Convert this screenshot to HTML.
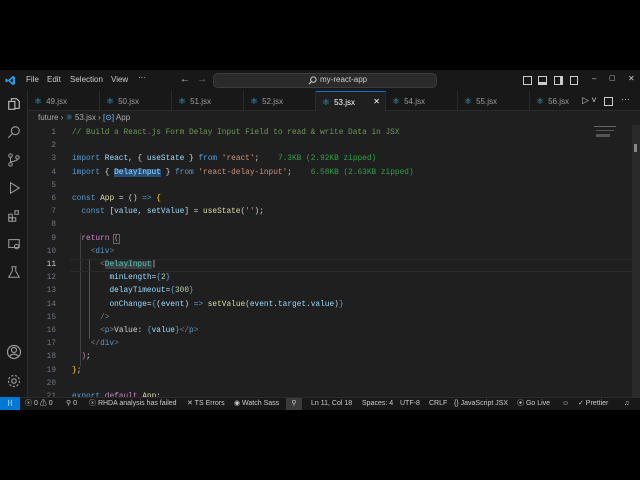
<!DOCTYPE html>
<html><head><meta charset="utf-8"><style>
*{margin:0;padding:0;box-sizing:border-box}
body{width:640px;height:480px;background:#000;position:relative;overflow:hidden;font-family:"Liberation Sans",sans-serif;color:#ccc}
.abs{position:absolute}
#title{left:0;top:70px;width:640px;height:21px;background:#181818;font-size:8px}
#tabs{left:28px;top:91px;width:612px;height:20px;background:#181818;border-bottom:1px solid #2b2b2b}
.tab{position:absolute;top:0;height:20px;width:72px;font-size:8px;color:#9d9d9d;line-height:20px;padding-left:6px;border-right:1px solid #2b2b2b}
.tab i{font-style:normal;color:#3fb6d5;margin-right:4px;font-size:9px}
#act{left:0;top:91px;width:28px;height:306px;background:#181818;border-right:1px solid #2b2b2b}
#ed{left:28px;top:111px;width:612px;height:286px;background:#1f1f1f}
.ln{position:absolute;left:28px;width:28px;text-align:right;font-family:"Liberation Mono",monospace;font-size:7.8px;color:#6e7681;line-height:13.2px}
.cd{position:absolute;left:72px;font-family:"Liberation Mono",monospace;font-size:7.8px;color:#d4d4d4;line-height:13.2px;white-space:pre}
.k{color:#569cd6}.c{color:#6a9955}.s{color:#ce9178}.v{color:#9cdcfe}.f{color:#dcdcaa}.t{color:#4ec9b0}.p{color:#c586c0}.g{color:#808080}.n{color:#b5cea8}.y{color:#ffd700}.sz{color:#2ea043}
#status{left:0;top:397px;width:640px;height:13px;background:#181818;border-top:1px solid #2b2b2b;font-size:7px;line-height:12px;color:#ccc;white-space:nowrap}
#status span{position:absolute;top:0}
svg{position:absolute}
</style></head><body>
<div id="title" class="abs">
 <svg style="left:5px;top:5px" width="11" height="11" viewBox="0 0 24 24"><path d="M17 2l5 2.5v15L17 22 7 13l-4 3-2-1V9l2-1 4 3 10-9zm0 5l-6 5 6 5z" fill="#2b9be8"/></svg>
 <span class="abs" style="left:26px;top:5px">File</span>
 <span class="abs" style="left:47px;top:5px">Edit</span>
 <span class="abs" style="left:70px;top:5px">Selection</span>
 <span class="abs" style="left:111px;top:5px">View</span>
 <span class="abs" style="left:138px;top:3px">···</span>
 <span class="abs" style="left:180px;top:4px;font-size:10px">←</span>
 <span class="abs" style="left:197px;top:4px;font-size:10px;color:#777">→</span>
 <div class="abs" style="left:213px;top:3px;width:224px;height:15px;background:#2a2a2a;border:1px solid #3c3c3c;border-radius:5px"></div>
 <svg style="left:308px;top:6px" width="9" height="9" viewBox="0 0 10 10" fill="none" stroke="#ccc" stroke-width="1.1"><circle cx="6" cy="4" r="3"/><path d="M4 6L1 9"/></svg>
 <span class="abs" style="left:320px;top:5px">my-react-app</span>
 <div class="abs" style="left:523px;top:6px;width:9px;height:9px;border:1px solid #ccc"></div>
 <div class="abs" style="left:538px;top:6px;width:9px;height:9px;border:1px solid #ccc;border-bottom-width:3px"></div>
 <div class="abs" style="left:554px;top:6px;width:9px;height:9px;border:1px solid #ccc;border-right-width:3px"></div>
 <div class="abs" style="left:570px;top:6px;width:8px;height:9px;border:1px solid #ccc"></div>
 <span class="abs" style="left:592px;top:4px">–</span>
 <span class="abs" style="left:609px;top:4px;font-size:7px">▢</span>
 <span class="abs" style="left:628px;top:4px">✕</span>
</div>
<div id="act" class="abs">
 <svg style="left:7px;top:6px" width="14" height="14" viewBox="0 0 16 16" fill="none" stroke="#ccc" stroke-width="1.2"><path d="M5 4V2h6l3 3v8H9"/><rect x="2" y="5" width="7" height="9"/></svg>
 <svg style="left:7px;top:34px" width="14" height="14" viewBox="0 0 16 16" fill="none" stroke="#999" stroke-width="1.3"><circle cx="9.5" cy="6.5" r="4.5"/><path d="M6 10l-4.5 4.5"/></svg>
 <svg style="left:7px;top:62px" width="14" height="14" viewBox="0 0 16 16" fill="none" stroke="#999" stroke-width="1.2"><circle cx="4" cy="3" r="2"/><circle cx="4" cy="13" r="2"/><circle cx="12" cy="5" r="2"/><path d="M4 5v6M12 7c0 3-8 2-8 4"/></svg>
 <svg style="left:7px;top:90px" width="14" height="14" viewBox="0 0 16 16" fill="none" stroke="#999" stroke-width="1.2"><path d="M4 2l10 6-10 6z"/></svg>
 <svg style="left:7px;top:118px" width="14" height="14" viewBox="0 0 16 16" fill="none" stroke="#999" stroke-width="1.2"><rect x="2" y="6" width="4" height="4"/><rect x="6" y="10" width="4" height="4"/><rect x="2" y="10" width="4" height="4"/><rect x="9" y="2" width="4" height="4"/></svg>
 <svg style="left:7px;top:146px" width="14" height="14" viewBox="0 0 16 16" fill="none" stroke="#999" stroke-width="1.2"><rect x="2" y="3" width="12" height="9"/><circle cx="11" cy="11" r="2.5"/></svg>
 <svg style="left:7px;top:174px" width="14" height="14" viewBox="0 0 16 16" fill="none" stroke="#999" stroke-width="1.2"><path d="M6 2v5L2 14h12l-4-7V2M5 2h6"/></svg>
 <svg style="left:6px;top:253px" width="16" height="16" viewBox="0 0 16 16" fill="none" stroke="#999" stroke-width="1.2"><circle cx="8" cy="8" r="6.5"/><circle cx="8" cy="6" r="2.5"/><path d="M3.5 12.5c2-3 7-3 9 0"/></svg>
 <svg style="left:6px;top:282px" width="16" height="16" viewBox="0 0 16 16" fill="none" stroke="#999" stroke-width="1.2"><circle cx="8" cy="8" r="2.2"/><circle cx="8" cy="8" r="5.5" stroke-dasharray="2.2 1.6"/></svg>
</div>
<div id="tabs" class="abs">
 <div class="tab" style="left:0"><i>⚛</i>49.jsx</div>
 <div class="tab" style="left:72px"><i>⚛</i>50.jsx</div>
 <div class="tab" style="left:144px"><i>⚛</i>51.jsx</div>
 <div class="tab" style="left:216px"><i>⚛</i>52.jsx</div>
 <div class="tab" style="left:288px;width:70px;background:#1f1f1f;color:#fff;border-top:1px solid #0078d4;height:21px"><i>⚛</i>53.jsx<span style="position:absolute;right:5px">✕</span></div>
 <div class="tab" style="left:358px"><i>⚛</i>54.jsx</div>
 <div class="tab" style="left:430px"><i>⚛</i>55.jsx</div>
 <div class="tab" style="left:502px;border:none"><i>⚛</i>56.jsx</div>
 <span class="abs" style="left:554px;top:4px;font-size:9px">▷ ˅</span>
 <div class="abs" style="left:576px;top:6px;width:9px;height:9px;border:1px solid #ccc"></div>
 <span class="abs" style="left:593px;top:3px;font-size:9px">···</span>
</div>
<div id="ed" class="abs"></div>
<div class="abs" style="left:38px;top:113px;font-size:8px;color:#aaa">future › <span style="color:#3fb6d5">⚛</span> 53.jsx › <span style="color:#75beff">[⊙]</span> App</div>
<div class="abs" style="left:594px;top:126px;width:22px;height:1px;background:#666"></div>
<div class="abs" style="left:596px;top:130px;width:18px;height:1px;background:#555"></div>
<div class="abs" style="left:596px;top:134px;width:14px;height:3px;background:#555"></div>
<div class="abs" style="left:632px;top:125px;width:8px;height:272px;background:#2a2a2a"></div>
<div class="abs" style="left:634px;top:144px;width:3px;height:8px;background:#888"></div>
<div class="abs" style="left:80px;top:233px;width:1px;height:133px;background:#404040"></div>
<div class="abs" style="left:89px;top:259px;width:1px;height:80px;background:#6b3f78"></div>
<div class="abs" style="left:70px;top:259px;width:570px;height:13px;border-top:1px solid #2a2a2a;border-bottom:1px solid #2a2a2a"></div>
<div id="code">
<div class="ln" style="top:127px">1<br>2<br>3<br>4<br>5<br>6<br>7<br>8<br>9<br>10<br><span style="color:#ccc">11</span><br>12<br>13<br>14<br>15<br>16<br>17<br>18<br>19<br>20<br>21</div>
<div class="cd" style="top:127px"><span class="c">// Build a React.js Form Delay Input Field to read &amp; write Data in JSX</span>

<span class="k">import</span> <span class="v">React</span>, { <span class="v">useState</span> } <span class="k">from</span> <span class="s">'react'</span>;    <span class="sz">7.3KB (2.92KB zipped)</span>
<span class="k">import</span> { <span class="v" style="background:#264f78">DelayInput</span> } <span class="k">from</span> <span class="s">'react-delay-input'</span>;    <span class="sz">6.58KB (2.63KB zipped)</span>

<span class="k">const</span> <span class="f">App</span> = () <span class="k">=&gt;</span> <span class="y">{</span>
  <span class="k">const</span> [<span class="v">value</span>, <span class="v">setValue</span>] = <span class="f">useState</span>(<span class="s">''</span>);

  <span class="p">return</span> <span class="p" style="outline:1px solid #666">(</span>
    <span class="g">&lt;</span><span class="k">div</span><span class="g">&gt;</span>
      <span class="g">&lt;</span><span class="t" style="background:#3a3d41">DelayInput</span>|
        <span class="v">minLength</span>=<span class="k">{</span><span class="n">2</span><span class="k">}</span>
        <span class="v">delayTimeout</span>=<span class="k">{</span><span class="n">300</span><span class="k">}</span>
        <span class="v">onChange</span>=<span class="k">{</span>(<span class="v">event</span>) <span class="k">=&gt;</span> <span class="f">setValue</span>(<span class="v">event</span>.<span class="v">target</span>.<span class="v">value</span>)<span class="k">}</span>
      <span class="g">/&gt;</span>
      <span class="g">&lt;</span><span class="k">p</span><span class="g">&gt;</span>Value: <span class="k">{</span><span class="v">value</span><span class="k">}</span><span class="g">&lt;/</span><span class="k">p</span><span class="g">&gt;</span>
    <span class="g">&lt;/</span><span class="k">div</span><span class="g">&gt;</span>
  <span class="p">)</span>;
<span class="y">}</span>;

<span class="k">export</span> <span class="p">default</span> <span class="f">App</span>;</div>
</div>
<div id="status" class="abs">
 <span style="left:0;width:20px;height:13px;background:#0078d4;text-align:center;color:#fff;top:-1px;line-height:13px">⟩⟨</span>
 <span style="left:25px">ⓧ 0 ⚠ 0</span>
 <span style="left:66px">⚲ 0</span>
 <span style="left:89px">ⓧ RHDA analysis has failed</span>
 <span style="left:187px">✕ TS Errors</span>
 <span style="left:234px">◉ Watch Sass</span>
 <span style="left:286px;width:16px;height:12px;background:#3a3a3a;text-align:center">⚲</span>
 <span style="left:311px">Ln 11, Col 18</span>
 <span style="left:362px">Spaces: 4</span>
 <span style="left:400px">UTF-8</span>
 <span style="left:429px">CRLF</span>
 <span style="left:454px">{} JavaScript JSX</span>
 <span style="left:517px">⦿ Go Live</span>
 <span style="left:562px">☺</span>
 <span style="left:578px">✓ Prettier</span>
 <span style="left:624px">♫</span>
</div>
</body></html>
